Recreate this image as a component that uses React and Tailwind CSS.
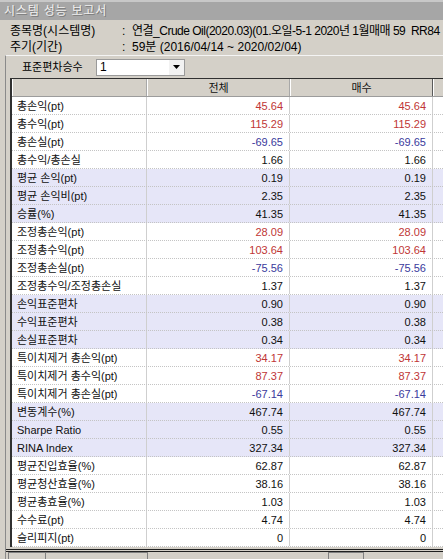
const ROWS = [
  ['총손익(pt)', '45.64', 'r', 0],
  ['총수익(pt)', '115.29', 'r', 0],
  ['총손실(pt)', '-69.65', 'b', 0],
  ['총수익/총손실', '1.66', 'k', 0],
  ['평균 손익(pt)', '0.19', 'k', 1],
  ['평균 손익비(pt)', '2.35', 'k', 1],
  ['승률(%)', '41.35', 'k', 1],
  ['조정총손익(pt)', '28.09', 'r', 0],
  ['조정총수익(pt)', '103.64', 'r', 0],
  ['조정총손실(pt)', '-75.56', 'b', 0],
  ['조정총수익/조정총손실', '1.37', 'k', 0],
  ['손익표준편차', '0.90', 'k', 1],
  ['수익표준편차', '0.38', 'k', 1],
  ['손실표준편차', '0.34', 'k', 1],
  ['특이치제거 총손익(pt)', '34.17', 'r', 0],
  ['특이치제거 총수익(pt)', '87.37', 'r', 0],
  ['특이치제거 총손실(pt)', '-67.14', 'b', 0],
  ['변동계수(%)', '467.74', 'k', 1],
  ['Sharpe Ratio', '0.55', 'k', 1],
  ['RINA Index', '327.34', 'k', 1],
  ['평균진입효율(%)', '62.87', 'k', 0],
  ['평균청산효율(%)', '38.16', 'k', 0],
  ['평균총효율(%)', '1.03', 'k', 0],
  ['수수료(pt)', '4.74', 'k', 0],
  ['슬리피지(pt)', '0', 'k', 0],
];

const TONE = {
  r: 'text-[#c03636]',
  b: 'text-[#3a3a9c]',
  k: 'text-[#101010]',
};

function Row({ label, value, tone, shaded }) {
  const bg = shaded ? 'bg-[#e6e6f8]' : 'bg-white';
  return (
    <div className={`flex h-[18px] border-b border-dotted border-[#c4c4c4] ${bg}`}>
      <div className="w-[135px] shrink-0 border-r border-[#cfcfcf] pl-[5px] leading-[19px] whitespace-nowrap text-[#101010]">
        {label}
      </div>
      <div className={`w-[143px] shrink-0 border-r border-[#cfcfcf] pr-[6px] text-right leading-[19px] ${TONE[tone]}`}>
        {value}
      </div>
      <div className={`w-[143px] shrink-0 border-r border-[#cfcfcf] pr-[6px] text-right leading-[19px] ${TONE[tone]}`}>
        {value}
      </div>
      <div className="flex-1" />
    </div>
  );
}

export default function App() {
  return (
    <div
      className="w-[443px] h-[559px] overflow-hidden bg-[#d4d0c8] text-[11px] text-black flex flex-col"
      style={{ fontFamily: '"Liberation Sans", "Noto Sans CJK KR", sans-serif' }}
    >
      {/* Title bar */}
      <div className="h-[20px] shrink-0 border-t-2 border-[#c8c8c8] bg-[#a6a6a6] pl-[4px] text-[12px] leading-[19px] tracking-[0.8px] text-[#f0f0f0] [text-shadow:1px_1px_0_#7a7a7a]">
        시스템 성능 보고서
      </div>

      {/* Info lines */}
      <div className="shrink-0 pt-[3px] pl-[10px] text-[12px] whitespace-nowrap">
        <div className="flex h-[16px] leading-[16px]">
          <span className="w-[112px] shrink-0">종목명(시스템명)</span>
          <span className="w-[10px] shrink-0">:</span>
          <span className="tracking-[-0.5px]">연결_Crude Oil(2020.03)(01.오일-5-1 2020년 1월매매 59&nbsp;&nbsp;RR84</span>
        </div>
        <div className="flex h-[16px] leading-[16px]">
          <span className="w-[112px] shrink-0">주기(기간)</span>
          <span className="w-[10px] shrink-0">:</span>
          <span>59분 (2016/04/14 ~ 2020/02/04)</span>
        </div>
      </div>

      {/* Panel */}
      <div className="ml-[5px] flex min-h-0 flex-1 flex-col border-l border-t border-l-[#8a8a8a] border-t-[#f4f4f4]">
        <div className="flex h-[22px] shrink-0 items-center">
          <span className="ml-[16px] w-[74px] text-[11px]">표준편차승수</span>
          <div className="flex h-[17px] w-[89px] items-center border border-[#9a9a9a] bg-white">
            <span className="flex-1 pl-[3px] text-[12px] leading-[15px]">1</span>
            <div className="flex h-full w-[15px] items-center justify-center bg-[#f2f2f2]">
              <svg width="7" height="4" viewBox="0 0 7 4">
                <path d="M0 0h7L3.5 4z" fill="#000" />
              </svg>
            </div>
          </div>
        </div>

        {/* Grid */}
        <div className="ml-[4px] flex flex-col border-l-2 border-t border-[#303030] bg-[#d4d0c8]">
          <div className="flex h-[18px] border-b border-[#9c9c9c] text-[#101010]">
            <div className="w-[135px] shrink-0 border-r border-l border-r-[#a8a8a8] border-l-white" />
            <div className="w-[143px] shrink-0 border-r border-l border-r-[#a8a8a8] border-l-white text-center leading-[18px]">
              전체
            </div>
            <div className="w-[143px] shrink-0 border-r border-l border-r-[#5a5a5a] border-l-white text-center leading-[18px]">
              매수
            </div>
            <div className="flex-1 border-l border-white" />
          </div>
          {ROWS.map(([label, value, tone, shaded]) => (
            <Row key={label} label={label} value={value} tone={tone} shaded={shaded} />
          ))}
        </div>

        {/* Bottom tab strip */}
        <div className="mt-[2px] h-[3px] border-t border-b border-[#202020]" />
        <div className="flex h-[10px] text-[9px]">
          <div className="ml-[2px] w-[38px] border-l border-t border-r border-[#808080] bg-[#d4d0c8]" />
          <div className="w-[102px] border-t border-r border-[#808080]" />
          <div className="w-[180px]" />
          <div className="w-[36px] border-l border-t border-r border-[#808080]" />
        </div>
      </div>
    </div>
  );
}
